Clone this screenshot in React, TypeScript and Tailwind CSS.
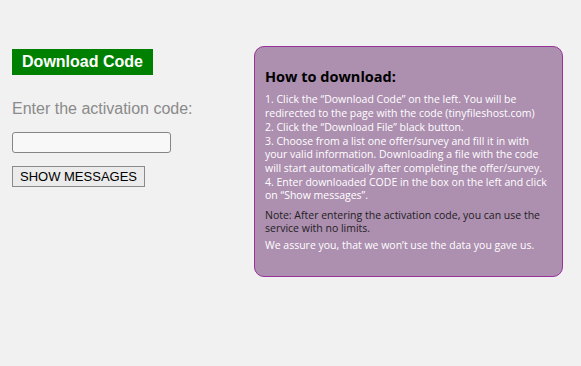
export default function App() {
  return (
    <div className="w-[581px] h-[366px] bg-[#f1f1f1] flex overflow-hidden" style={{ fontFamily: '"Liberation Sans", Arial, sans-serif' }}>
      <div className="w-[254px] pl-[12px] pt-[49px] flex flex-col items-start">
        <a className="block bg-[#008000] text-white font-bold text-[16px] leading-[26px] h-[26px] w-[141px] text-center">Download Code</a>
        <p className="mt-[25px] text-[16px] leading-[18px] text-[#8a8a8a]">Enter the activation code:</p>
        <input className="mt-[14px] w-[159px] h-[21px] bg-[#f8f8f8] border border-[#858585] rounded-[3px]" />
        <button className="mt-[13px] w-[133px] h-[21px] bg-[#ebebeb] border border-[#8a8a8a] text-[13px] leading-[19px] text-black">SHOW MESSAGES</button>
      </div>
      <div className="mt-[46px] w-[309px] h-[231px] bg-[#ad8fb0] border border-[#993399] rounded-[10px] pl-[10px] pr-[11px] pt-[20px]" style={{ fontFamily: '"Open Sans", "Noto Sans", sans-serif' }}>
        <h2 className="text-[14.5px] font-bold leading-[20px] text-black">How to download:</h2>
        <div className="mt-[6px] text-[10.5px] leading-[13.5px] text-white">
          <p>1. Click the “Download Code” on the left. You will be redirected to the page with the code (tinyfileshost.com)</p>
          <p className="mt-[0.5px]">2. Click the “Download File” black button.</p>
          <p className="mt-[0.5px]">3. Choose from a list one offer/survey and fill it in with your valid information. Downloading a file with the code will start automatically after completing the offer/survey.</p>
          <p className="mt-[0.5px]">4. Enter downloaded CODE in the box on the left and click on “Show messages”.</p>
          <p className="mt-[6px] text-[#1e1e1e]">Note: After entering the activation code, you can use the service with no limits.</p>
          <p className="mt-[3.5px]">We assure you, that we won’t use the data you gave us.</p>
        </div>
      </div>
    </div>
  );
}
